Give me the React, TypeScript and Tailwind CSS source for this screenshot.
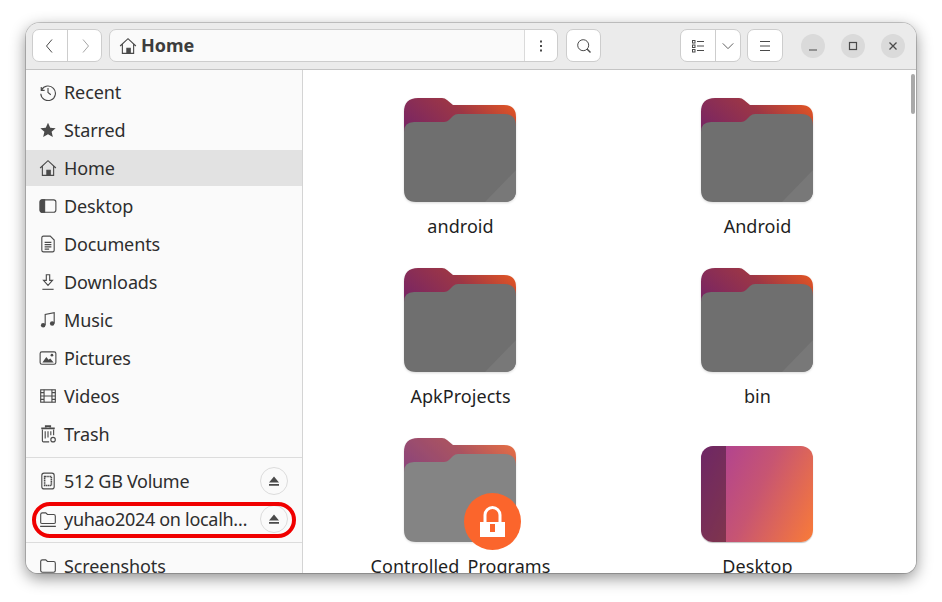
import type { ReactNode } from "react";

const ink = "#4a4a4a";

function Icon({ children, size = 18 }: { children: ReactNode; size?: number }) {
  return (
    <svg width={size} height={size} viewBox="0 0 16 16" fill="none" stroke={ink} strokeWidth="1" className="shrink-0">
      {children}
    </svg>
  );
}

const HomeIcon = () => (
  <Icon>
    <path d="M1 8 8 1.5 15 8M3 6.5V14.5H13V6.5" />
    <path d="M7 14.5V10H10V14.5" fill={ink} />
  </Icon>
);

const icons: Record<string, ReactNode> = {
  Recent: (
    <Icon>
      <path d="M2 3.5V6.5H5M2.3 6.2A6.5 6.5 0 1 1 1.6 9.5" />
      <path d="M8 4.5V8.5L10.5 10.5" />
    </Icon>
  ),
  Starred: (
    <Icon>
      <path d="M8 1.5 10 6 14.8 6.4 11.2 9.6 12.3 14.3 8 11.8 3.7 14.3 4.8 9.6 1.2 6.4 6 6Z" fill={ink} stroke="none" />
    </Icon>
  ),
  Home: <HomeIcon />,
  Desktop: (
    <Icon>
      <rect x="1" y="2.5" width="14" height="11" rx="2" />
      <path d="M1 4.5Q1 2.5 3 2.5H5V13.5H3Q1 13.5 1 11.5Z" fill={ink} />
    </Icon>
  ),
  Documents: (
    <Icon>
      <path d="M2.5 2.5Q2.5 1 4 1H10L13.5 4.5V13.5Q13.5 15 12 15H4Q2.5 15 2.5 13.5Z" />
      <path d="M5 6.5H11M5 8.5H11M5 10.5H11M5 12.5H9" />
    </Icon>
  ),
  Downloads: (
    <Icon>
      <path d="M6.5 1.5H9.5V6.5H12L8 11 4 6.5H6.5Z" />
      <path d="M3 14.5H13" />
    </Icon>
  ),
  Music: (
    <Icon>
      <path d="M5.5 12.5V3L13.5 1.5V11" />
      <circle cx="3.7" cy="12.7" r="2" fill={ink} stroke="none" />
      <circle cx="11.7" cy="11.2" r="2" fill={ink} stroke="none" />
    </Icon>
  ),
  Pictures: (
    <Icon>
      <rect x="1" y="2.5" width="14" height="11" rx="1.5" />
      <path d="M3 12 6.5 7 8.5 9.5 10 8.5 13 12Z" fill={ink} stroke="none" />
      <circle cx="11.5" cy="5.5" r="1.2" fill={ink} stroke="none" />
    </Icon>
  ),
  Videos: (
    <Icon>
      <rect x="1.5" y="2.5" width="13" height="11" />
      <path d="M4.5 2.5V13.5M11.5 2.5V13.5M4.5 8H11.5M1.5 5H4.5M1.5 8H4.5M1.5 11H4.5M11.5 5H14.5M11.5 8H14.5M11.5 11H14.5" />
    </Icon>
  ),
  Trash: (
    <Icon>
      <path d="M6 2V1H10V2M2 3H14" strokeWidth="1.5" />
      <path d="M3 4V14Q3 15 4 15H9M13 4V9M5.5 5.5V12M8 5.5V11M10.5 5.5V9" />
      <circle cx="12.5" cy="13" r="2" />
    </Icon>
  ),
  Volume: (
    <Icon>
      <rect x="2.5" y="1" width="11" height="14" rx="2" />
      <rect x="5" y="4" width="6" height="8" strokeWidth="1.4" strokeDasharray="1.2 0.4" />
    </Icon>
  ),
  Network: (
    <Icon>
      <path d="M1.5 11V4Q1.5 2.5 3 2.5H6L7.5 4H13Q14.5 4 14.5 5.5V11Q14.5 12 13 12H3Q1.5 12 1.5 11Z" />
      <path d="M1 14.5H15" />
    </Icon>
  ),
  Folder: (
    <Icon>
      <path d="M1.5 12V4Q1.5 2.5 3 2.5H6L7.5 4H13Q14.5 4 14.5 5.5V12Q14.5 13.5 13 13.5H3Q1.5 13.5 1.5 12Z" />
    </Icon>
  ),
};

function SideRow({ icon, label, active }: { icon: string; label: string; active?: boolean }) {
  return (
    <div className={`flex h-9 shrink-0 items-center gap-[7px] pl-[13px] ${active ? "bg-[#e2e2e2]" : ""}`}>
      {icons[icon]}
      <span className="text-[18px] tracking-[-0.1px] text-[#2e2e2e]">{label}</span>
    </div>
  );
}

function Eject() {
  return (
    <div className="ml-[5px] flex h-7 w-7 shrink-0 items-center justify-center rounded-full border border-[#dcdcdc]">
      <svg width="12" height="12" viewBox="0 0 12 12" fill={ink}>
        <path d="M6 1.5 11 7.5H1ZM1 9H11V10.8H1Z" />
      </svg>
    </div>
  );
}

function DeviceRow({ icon, label, children }: { icon: string; label: string; children?: ReactNode }) {
  return (
    <div className="relative flex h-9 shrink-0 items-center pl-[13px] pr-[14px]">
      {icons[icon]}
      <span className="ml-[7px] min-w-0 flex-1 truncate text-[18px] tracking-[-0.3px] text-[#2e2e2e]">{label}</span>
      <Eject />
      {children}
    </div>
  );
}

function FolderArt({ id }: { id: string }) {
  return (
    <svg width="112" height="104" viewBox="0 0 112 104">
      <defs>
        <linearGradient id={id} x1="0" y1="0.5" x2="1" y2="0">
          <stop offset="0" stopColor="#7a2662" />
          <stop offset="0.5" stopColor="#9c3646" />
          <stop offset="1" stopColor="#ee5a1e" />
        </linearGradient>
      </defs>
      <path d="M0 14Q0 0 14 0H38Q41 0 43 2L49 7H100Q112 7 112 19V50H0Z" fill={`url(#${id})`} />
      <path d="M0 34Q0 24 10 24H40Q43 24 45 22L49 18Q51 16 54 16H100Q112 16 112 28V92Q112 104 100 104H12Q0 104 0 92Z" fill="#6f6f6f" />
      <path d="M112 72V92Q112 104 100 104H81Z" fill="#787878" />
    </svg>
  );
}

function FolderCell({ name, locked }: { name: string; locked?: boolean }) {
  return (
    <div className="flex flex-col items-center">
      <div className={`relative mt-[28px] flex h-[104px] w-[112px] ${locked ? "opacity-85" : ""} drop-shadow-[0_1px_1px_rgba(0,0,0,0.15)]`}>
        <FolderArt id={name} />
      </div>
      <span className="mt-[13px] pl-[2px] text-[18px] leading-[22px] tracking-[0.05px] text-[#1f1f1f]">{name}</span>
    </div>
  );
}

function DesktopCell() {
  return (
    <div className="flex flex-col items-center">
      <div className="mt-[36px] flex h-[96px] w-[112px] overflow-hidden rounded-[12px] bg-[linear-gradient(115deg,#a93c9c,#c75572_50%,#f97b38)] shadow-[0_1px_1px_rgba(0,0,0,0.25)]">
        <div className="h-full w-[25px] bg-black/35" />
      </div>
      <span className="mt-[13px] pl-[2px] text-[18px] leading-[22px] tracking-[0.05px] text-[#1f1f1f]">Desktop</span>
    </div>
  );
}

const rows = ["Recent", "Starred", "Home", "Desktop", "Documents", "Downloads", "Music", "Pictures", "Videos", "Trash"];

export default function App() {
  return (
    <div className="h-[602px] w-[942px] overflow-hidden bg-white pl-[26px] pt-[23px] font-['Noto_Sans',sans-serif]">
      <div className="flex h-[550px] w-[890px] flex-col overflow-hidden rounded-t-[14px] rounded-b-[12px] bg-white shadow-[0_0_0_1px_rgba(0,0,0,0.18),0_5px_16px_rgba(0,0,0,0.45)]">
        {/* header bar */}
        <header className="flex h-[47px] shrink-0 items-center border-b border-[#c4c4c4] bg-[#ebebeb] pl-[6px] pb-px">
          <div className="flex h-[33px] w-[70px] rounded-[7px] border border-[#cdcdcd] bg-white">
            <div className="flex w-[35px] items-center justify-center border-r border-[#cdcdcd]">
              <svg width="16" height="16" viewBox="0 0 16 16" fill="none" stroke={ink}><path d="M10 1.5 4.5 8 10 14.5" /></svg>
            </div>
            <div className="flex flex-1 items-center justify-center">
              <svg width="16" height="16" viewBox="0 0 16 16" fill="none" stroke="#a5a5a5"><path d="M6 1.5 11.5 8 6 14.5" /></svg>
            </div>
          </div>
          <div className="ml-[7px] flex h-[33px] w-[449px] rounded-[7px] border border-[#cdcdcd] bg-[#fafafa]">
            <div className="flex flex-1 items-center gap-[4px] border-r border-[#dadada] pl-[9px]">
              <HomeIcon />
              <span className="text-[18px] font-bold text-[#3d3d3d]">Home</span>
            </div>
            <div className="flex w-[32px] items-center justify-center rounded-r-[7px] bg-white">
              <svg width="16" height="16" viewBox="0 0 16 16" fill={ink}><rect x="7" y="2.5" width="2" height="2" /><rect x="7" y="7" width="2" height="2" /><rect x="7" y="11.5" width="2" height="2" /></svg>
            </div>
          </div>
          <div className="ml-[8px] flex h-[33px] w-[35px] items-center justify-center rounded-[7px] border border-[#cdcdcd] bg-white">
            <svg width="16" height="16" viewBox="0 0 16 16" fill="none" stroke={ink}><circle cx="7.2" cy="7.2" r="5.5" /><path d="M11 11 14.5 14.5" strokeWidth="1.4" /></svg>
          </div>
          <div className="ml-[79px] flex h-[33px] w-[61px] rounded-[7px] border border-[#cdcdcd] bg-white">
            <div className="flex w-[35px] items-center justify-center border-r border-[#cdcdcd]">
              <svg width="16" height="16" viewBox="0 0 16 16" fill="none" stroke={ink}><rect x="2.5" y="2.5" width="2.5" height="2.5" /><rect x="2.5" y="7" width="2.5" height="2.5" /><rect x="2.5" y="11.5" width="2.5" height="2.5" /><path d="M7 3.5H14M7 8H14M7 12.5H14" /></svg>
            </div>
            <div className="flex flex-1 items-center justify-center">
              <svg width="14" height="14" viewBox="0 0 16 16" fill="none" stroke={ink}><path d="M2 5 8 11 14 5" /></svg>
            </div>
          </div>
          <div className="ml-[6px] flex h-[33px] w-[36px] items-center justify-center rounded-[7px] border border-[#cdcdcd] bg-white">
            <svg width="16" height="16" viewBox="0 0 16 16" fill="none" stroke={ink}><path d="M3 3.5H13M3 8H13M3 12.5H13" /></svg>
          </div>
          <div className="ml-[18px] flex gap-4">
            <div className="flex h-6 w-6 items-center justify-center rounded-full bg-[#dadada]">
              <svg width="12" height="12" viewBox="0 0 12 12" stroke={ink} strokeWidth="1.2"><path d="M2 10H10" /></svg>
            </div>
            <div className="flex h-6 w-6 items-center justify-center rounded-full bg-[#dadada]">
              <svg width="12" height="12" viewBox="0 0 12 12" fill="none" stroke={ink} strokeWidth="1.2"><rect x="2.5" y="2.5" width="7" height="7" /></svg>
            </div>
            <div className="flex h-6 w-6 items-center justify-center rounded-full bg-[#dadada]">
              <svg width="12" height="12" viewBox="0 0 12 12" fill="none" stroke={ink} strokeWidth="1.3"><path d="M2.5 2.5 9.5 9.5M9.5 2.5 2.5 9.5" /></svg>
            </div>
          </div>
        </header>

        <div className="flex min-h-0 flex-1">
          {/* sidebar */}
          <aside className="flex w-[277px] shrink-0 flex-col gap-[2px] overflow-hidden border-r border-[#d4d4d4] bg-[#fafafa] pt-[4px]">
            {rows.map((r) => (
              <SideRow key={r} icon={r} label={r} active={r === "Home"} />
            ))}
            <div className="my-[3px] shrink-0 border-t border-[#dcdcdc]" />
            <DeviceRow icon="Volume" label="512 GB Volume" />
            <DeviceRow icon="Network" label="yuhao2024 on localhost">
              <div className="absolute inset-x-[6px] top-[1px] bottom-[-1px] rounded-full border-4 border-[#f00000]" />
            </DeviceRow>
            <div className="my-[3px] shrink-0 border-t border-[#dcdcdc]" />
            <SideRow icon="Folder" label="Screenshots" />
          </aside>

          {/* file grid */}
          <main className="relative min-w-0 flex-1 overflow-hidden bg-white pl-[8px]">
            <div className="grid grid-cols-[297px_297px] auto-rows-[170px]">
              <FolderCell name="android" />
              <FolderCell name="Android" />
              <FolderCell name="ApkProjects" />
              <FolderCell name="bin" />
              <div className="relative">
                <FolderCell name="Controlled_Programs" locked />
                <div className="absolute left-[153px] top-[83px] flex h-[57px] w-[57px] items-center justify-center rounded-full bg-[#fb652c]">
                  <svg width="25" height="31" viewBox="0 0 25 31">
                    <path d="M5 17V9A7.5 7.5 0 0 1 20 9V17" fill="none" stroke="#fff" strokeWidth="3" />
                    <path d="M0 16H25V31H0ZM10 18V26H15V18Z" fill="#fff" fillRule="evenodd" />
                  </svg>
                </div>
              </div>
              <DesktopCell />
            </div>
            <div className="absolute right-[1px] top-[4px] h-10 w-[4px] rounded-full bg-[#a9a9a9]" />
          </main>
        </div>
      </div>
    </div>
  );
}
